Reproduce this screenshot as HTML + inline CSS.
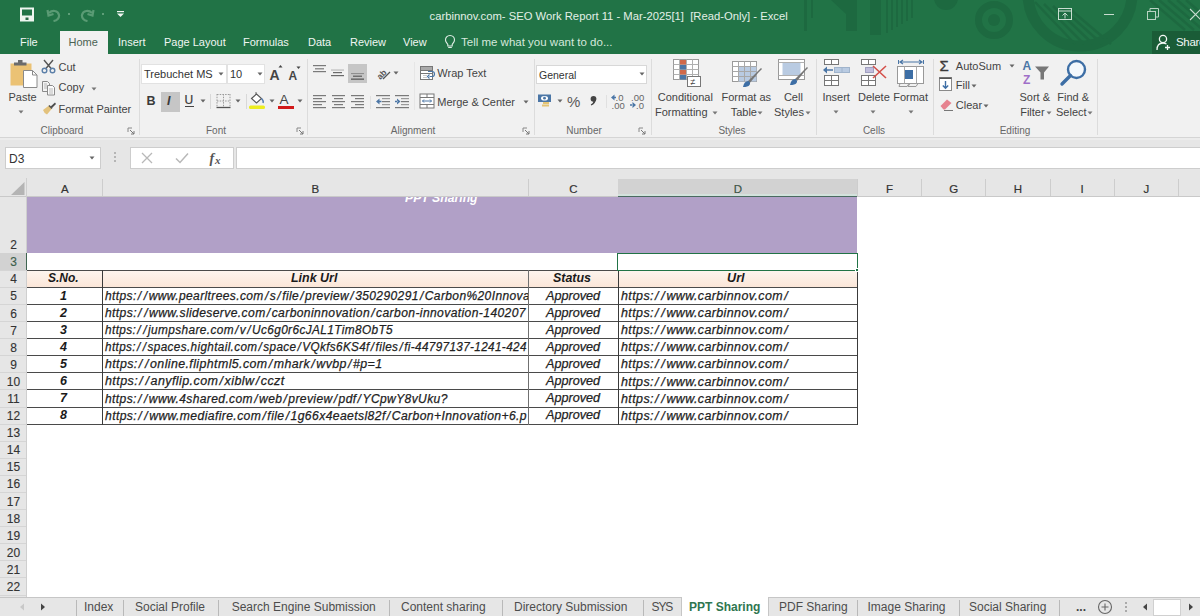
<!DOCTYPE html>
<html><head><meta charset="utf-8">
<style>
*{margin:0;padding:0;box-sizing:border-box}
html,body{width:1200px;height:616px;overflow:hidden;background:#fff;font-family:"Liberation Sans",sans-serif}
.a{position:absolute}
.t{white-space:nowrap;line-height:1}
.c{position:absolute;white-space:nowrap;line-height:1;font-family:"Liberation Sans",sans-serif;font-weight:bold;font-style:italic;font-size:12.5px;color:#1a1a1a;transform-origin:0 0}
.s{margin:0 1.2px}
</style></head><body>

<div class="a" style="left:0px;top:0px;width:1200px;height:54px;background:#217346"></div>
<svg class="a" style="left:0px;top:0px;" width="1200" height="54" viewBox="0 0 1200 54"><rect x="804" y="0" width="3" height="31" fill="#1d6940"/><rect x="811" y="0" width="2" height="18" fill="#1d6940"/><path d="M831 0 L846 0 L846 14 Z" fill="#1d6940"/><rect x="846" y="0" width="11" height="31" fill="#1d6940"/><rect x="870" y="0" width="11" height="35" fill="#1d6940"/><rect x="886" y="0" width="2" height="33" fill="#1d6940"/><rect x="891" y="0" width="2" height="30" fill="#1d6940"/><rect x="896" y="0" width="2" height="27" fill="#1d6940"/><rect x="901" y="0" width="2" height="24" fill="#1d6940"/><rect x="906" y="0" width="2" height="21" fill="#1d6940"/><rect x="911" y="0" width="2" height="18" fill="#1d6940"/><circle cx="946" cy="-2" r="12" fill="#1d6940"/><circle cx="994" cy="20" r="15.5" fill="none" stroke="#1d6940" stroke-width="7"/><circle cx="994" cy="20" r="6" fill="#1d6940"/><circle cx="1080" cy="-6" r="52" fill="none" stroke="#1d6940" stroke-width="11"/><path d="M1035 2 L1075 44" stroke="#1d6940" stroke-width="2.5"/><path d="M1044 4 L1084 44" stroke="#1d6940" stroke-width="2.5"/><path d="M1053 6 L1093 44" stroke="#1d6940" stroke-width="2.5"/><path d="M1062 8 L1102 44" stroke="#1d6940" stroke-width="2.5"/><path d="M1071 10 L1111 44" stroke="#1d6940" stroke-width="2.5"/><path d="M1150 0 L1185 30" stroke="#1d6940" stroke-width="2.5"/><path d="M1159 0 L1194 30" stroke="#1d6940" stroke-width="2.5"/><path d="M1168 0 L1203 30" stroke="#1d6940" stroke-width="2.5"/><path d="M1177 0 L1212 30" stroke="#1d6940" stroke-width="2.5"/><path d="M1186 0 L1221 30" stroke="#1d6940" stroke-width="2.5"/></svg>
<svg class="a" style="left:18px;top:6px;" width="17" height="16" viewBox="0 0 17 16"><path d="M3 2.5 H15 V14.5 H3 Z" fill="none" stroke="#eef6f0" stroke-width="2"/><rect x="4" y="9.5" width="10" height="5" fill="#eef6f0"/><rect x="7.5" y="11.5" width="3" height="2.5" fill="#2a6b46"/></svg>
<svg class="a" style="left:46px;top:7px;" width="16" height="15" viewBox="0 0 16 15"><path d="M3 6 C6 3 12 3 13 8 C13.5 11 11 13.5 7.5 14" fill="none" stroke="#5a9b74" stroke-width="2.2"/><path d="M1.5 3 L2.5 8.5 L7.5 7" fill="none" stroke="#5a9b74" stroke-width="2.2"/></svg>
<div class="a" style="left:68px;top:13px;width:2px;height:2px;background:#5e9e78"></div>
<svg class="a" style="left:79px;top:7px;" width="16" height="15" viewBox="0 0 16 15"><path d="M13 6 C10 3 4 3 3 8 C2.5 11 5 13.5 8.5 14" fill="none" stroke="#5a9b74" stroke-width="2.2"/><path d="M14.5 3 L13.5 8.5 L8.5 7" fill="none" stroke="#5a9b74" stroke-width="2.2"/></svg>
<div class="a" style="left:102px;top:13px;width:2px;height:2px;background:#5e9e78"></div>
<svg class="a" style="left:116px;top:10px;" width="9" height="8" viewBox="0 0 9 8"><rect x="1" y="1" width="7" height="1.2" fill="#f2f7f4"/><path d="M1 3.5 H8 L4.5 7 Z" fill="#f2f7f4"/></svg>
<div class="a t" style="left:429.5px;top:10.64px;font-size:11.25px;color:#e3f0e7;">carbinnov.com- SEO Work Report 11 - Mar-2025[1]&nbsp; [Read-Only] - Excel</div>
<svg class="a" style="left:1058px;top:8px;" width="15" height="13" viewBox="0 0 15 13"><rect x="0.5" y="0.5" width="13" height="11" fill="none" stroke="#c8ddd0" stroke-width="1"/><path d="M0.5 3 H13.5" stroke="#c8ddd0"/><path d="M7 10.5 V5 M4.5 7.5 L7 5 L9.5 7.5" fill="none" stroke="#c8ddd0"/></svg>
<div class="a" style="left:1104px;top:14px;width:10px;height:1px;background:#c8ddd0"></div>
<svg class="a" style="left:1147px;top:8px;" width="13" height="13" viewBox="0 0 13 13"><rect x="0.5" y="3.5" width="8" height="8" fill="none" stroke="#b9d3c3"/><path d="M3 3.5 V0.5 H11.5 V9 H8.5" fill="none" stroke="#b9d3c3"/></svg>
<svg class="a" style="left:1189px;top:8px;" width="11" height="14" viewBox="0 0 11 14"><path d="M1 1 L12 12 M12 1 L1 12" stroke="#c8ddd0" stroke-width="1.1"/></svg>
<div class="a" style="left:60px;top:31px;width:48px;height:23px;background:#f1f1f1"></div>
<div class="a t" style="left:20px;top:37.15px;font-size:11px;color:#f0f6f2;">File</div>
<div class="a t" style="left:118px;top:37.15px;font-size:11px;color:#f0f6f2;">Insert</div>
<div class="a t" style="left:164px;top:37.15px;font-size:11px;color:#f0f6f2;">Page Layout</div>
<div class="a t" style="left:243px;top:37.15px;font-size:11px;color:#f0f6f2;">Formulas</div>
<div class="a t" style="left:308px;top:37.15px;font-size:11px;color:#f0f6f2;">Data</div>
<div class="a t" style="left:350px;top:37.15px;font-size:11px;color:#f0f6f2;">Review</div>
<div class="a t" style="left:403px;top:37.15px;font-size:11px;color:#f0f6f2;">View</div>
<div class="a t" style="left:68.5px;top:37.15px;font-size:11px;color:#4b6353;">Home</div>
<svg class="a" style="left:444px;top:34px;" width="12" height="15" viewBox="0 0 12 15"><path d="M6 1.5 C3 1.5 1.5 3.8 1.5 6 C1.5 8 3 9 3.8 10.5 V12 H8.2 V10.5 C9 9 10.5 8 10.5 6 C10.5 3.8 9 1.5 6 1.5 Z M4.2 13.5 H7.8" fill="none" stroke="#e0eee6" stroke-width="1.1"/></svg>
<div class="a t" style="left:461px;top:36.73px;font-size:11.5px;color:#d5e8dc;">Tell me what you want to do...</div>
<div class="a" style="left:1152px;top:31px;width:48px;height:23px;background:#1a5c37"></div>
<svg class="a" style="left:1156px;top:34px;" width="15" height="17" viewBox="0 0 15 17"><circle cx="7" cy="5" r="3.6" fill="none" stroke="#f2f7f4" stroke-width="1.3"/><path d="M1 16 C1 11 4 9 7 9 C8.5 9 9.5 9.5 10.5 10" fill="none" stroke="#f2f7f4" stroke-width="1.3"/><path d="M11.5 11 V16 M9 13.5 H14" stroke="#f2f7f4" stroke-width="1.3"/></svg>
<div class="a t" style="left:1176px;top:37.23px;font-size:11.5px;color:#f2f7f4;letter-spacing:-0.3px">Share</div>
<div class="a" style="left:0px;top:54px;width:1200px;height:83px;background:#f1f1f1"></div>
<div class="a" style="left:0px;top:137px;width:1200px;height:1px;background:#d5d5d5"></div>
<div class="a" style="left:139px;top:59px;width:1px;height:76px;background:#dcdcdc"></div>
<div class="a" style="left:307px;top:59px;width:1px;height:76px;background:#dcdcdc"></div>
<div class="a" style="left:534px;top:59px;width:1px;height:76px;background:#dcdcdc"></div>
<div class="a" style="left:651px;top:59px;width:1px;height:76px;background:#dcdcdc"></div>
<div class="a" style="left:816px;top:59px;width:1px;height:76px;background:#dcdcdc"></div>
<div class="a" style="left:933px;top:59px;width:1px;height:76px;background:#dcdcdc"></div>
<div class="a" style="left:1097px;top:59px;width:1px;height:76px;background:#dcdcdc"></div>
<div class="a t" style="left:32.0px;top:125.5px;width:60px;text-align:center;font-size:10px;color:#676767">Clipboard</div>
<div class="a t" style="left:196.0px;top:125.5px;width:40px;text-align:center;font-size:10px;color:#676767">Font</div>
<div class="a t" style="left:378.0px;top:125.5px;width:70px;text-align:center;font-size:10px;color:#676767">Alignment</div>
<div class="a t" style="left:559.0px;top:125.5px;width:50px;text-align:center;font-size:10px;color:#676767">Number</div>
<div class="a t" style="left:707.0px;top:125.5px;width:50px;text-align:center;font-size:10px;color:#676767">Styles</div>
<div class="a t" style="left:854.0px;top:125.5px;width:40px;text-align:center;font-size:10px;color:#676767">Cells</div>
<div class="a t" style="left:990.0px;top:125.5px;width:50px;text-align:center;font-size:10px;color:#676767">Editing</div>
<svg class="a" style="left:127px;top:127px;" width="8" height="8" viewBox="0 0 8 8"><path d="M1 1 H5 M1 1 V5" stroke="#888" stroke-width="1"/><path d="M3 3 L7 7 M7 4 V7 H4" fill="none" stroke="#777" stroke-width="1"/></svg>
<svg class="a" style="left:296px;top:127px;" width="8" height="8" viewBox="0 0 8 8"><path d="M1 1 H5 M1 1 V5" stroke="#888" stroke-width="1"/><path d="M3 3 L7 7 M7 4 V7 H4" fill="none" stroke="#777" stroke-width="1"/></svg>
<svg class="a" style="left:522px;top:127px;" width="8" height="8" viewBox="0 0 8 8"><path d="M1 1 H5 M1 1 V5" stroke="#888" stroke-width="1"/><path d="M3 3 L7 7 M7 4 V7 H4" fill="none" stroke="#777" stroke-width="1"/></svg>
<svg class="a" style="left:638px;top:127px;" width="8" height="8" viewBox="0 0 8 8"><path d="M1 1 H5 M1 1 V5" stroke="#888" stroke-width="1"/><path d="M3 3 L7 7 M7 4 V7 H4" fill="none" stroke="#777" stroke-width="1"/></svg>
<svg class="a" style="left:9px;top:59px;" width="30" height="30" viewBox="0 0 30 30"><rect x="1.5" y="4.5" width="21" height="22" fill="#ebc274"/><rect x="5" y="3.5" width="12.5" height="3" fill="#6b6b6b"/><rect x="9" y="1" width="4.5" height="3" fill="#6b6b6b"/><path d="M14.5 11.5 H23.5 L28 16 V28.5 H14.5 Z" fill="#fff" stroke="#8a8a8a" stroke-width="1"/><path d="M23.5 11.5 V16 H28" fill="none" stroke="#8a8a8a" stroke-width="1"/></svg>
<div class="a t" style="left:8.5px;top:91.65px;font-size:11px;color:#444;">Paste</div>
<svg class="a" style="left:17.5px;top:110px;" width="6" height="4" viewBox="0 0 6 4"><path d="M0.5 0.5 L5.5 0.5 L3 3.5 Z" fill="#777"/></svg>
<svg class="a" style="left:41px;top:59px;" width="15" height="15" viewBox="0 0 15 15"><path d="M3 1 L10.5 10 M12 1 L4.5 10" stroke="#555" stroke-width="1.4"/><circle cx="3.5" cy="11.5" r="2.3" fill="none" stroke="#5b7fa8" stroke-width="1.4"/><circle cx="11.5" cy="11.5" r="2.3" fill="none" stroke="#5b7fa8" stroke-width="1.4"/></svg>
<div class="a t" style="left:58.5px;top:62.15px;font-size:11px;color:#444;">Cut</div>
<svg class="a" style="left:41px;top:80px;" width="15" height="16" viewBox="0 0 15 16"><path d="M1.5 1.5 H6.5 L8.5 3.5 V11.5 H1.5 Z" fill="#f4f4f4" stroke="#8a8a8a" stroke-width="1"/><path d="M6.5 5.5 H11.5 L13.5 7.5 V15 H6.5 Z" fill="#fbfbfb" stroke="#8a8a8a" stroke-width="1"/><path d="M8 9 H12 M8 11 H12 M8 13 H12 M3 4 H6 M3 6 H6 M3 8 H6" stroke="#aaa" stroke-width="0.8"/></svg>
<div class="a t" style="left:58.5px;top:82.15px;font-size:11px;color:#444;">Copy</div>
<svg class="a" style="left:91px;top:87px;" width="6" height="4" viewBox="0 0 6 4"><path d="M0.5 0.5 L5.5 0.5 L3 3.5 Z" fill="#777"/></svg>
<svg class="a" style="left:41px;top:101px;" width="16" height="15" viewBox="0 0 16 15"><path d="M9 6 L14 1.5 L15 3 L10.5 7.5 Z" fill="#4d4d4d"/><path d="M2 9 L8 4.5 L11 7.5 L6 13.5 Q3 12 2 9 Z" fill="#e3c27c"/><path d="M8 4.5 L11 7.5" stroke="#555" stroke-width="1.5"/></svg>
<div class="a t" style="left:58.5px;top:103.65px;font-size:11px;color:#444;">Format Painter</div>
<div class="a" style="left:141px;top:64px;width:86px;height:20px;background:#fff;border:1px solid #e2e2e2"></div>
<div class="a" style="left:227px;top:64px;width:38px;height:20px;background:#fff;border:1px solid #e2e2e2;border-left:none"></div>
<div class="a" style="left:227px;top:65px;width:1px;height:18px;background:#e2e2e2"></div>
<div class="a t" style="left:144px;top:69.15px;font-size:11px;color:#333;">Trebuchet MS</div>
<svg class="a" style="left:218px;top:71.5px;" width="6" height="4" viewBox="0 0 6 4"><path d="M0.5 0.5 L5.5 0.5 L3 3.5 Z" fill="#666"/></svg>
<div class="a t" style="left:230px;top:69.15px;font-size:11px;color:#333;">10</div>
<svg class="a" style="left:256.5px;top:71.5px;" width="6" height="4" viewBox="0 0 6 4"><path d="M0.5 0.5 L5.5 0.5 L3 3.5 Z" fill="#666"/></svg>
<div class="a t" style="left:269.5px;top:68.10px;font-size:14px;color:#444;font-weight:bold">A</div>
<svg class="a" style="left:278px;top:64px;" width="5" height="5" viewBox="0 0 5 5"><path d="M0.5 3.5 L2.5 1 L4.5 3.5 Z" fill="#444"/></svg>
<div class="a t" style="left:288.5px;top:69.80px;font-size:12px;color:#444;font-weight:bold">A</div>
<svg class="a" style="left:296px;top:66px;" width="5" height="4" viewBox="0 0 5 4"><path d="M0.5 0.5 L4.5 0.5 L2.5 3 Z" fill="#444"/></svg>
<div class="a t" style="left:146.5px;top:94.67px;font-size:12.5px;color:#3a3a3a;font-weight:bold">B</div>
<div class="a" style="left:161px;top:91.5px;width:19px;height:20px;background:#c6c6c6"></div>
<div class="a t" style="left:167px;top:94.67px;font-size:12.5px;color:#3a3a3a;font-style:italic;font-weight:bold">I</div>
<div class="a t" style="left:184.5px;top:94.30px;font-size:12px;color:#3a3a3a;-webkit-text-stroke:0.2px #3a3a3a">U</div>
<div class="a" style="left:185px;top:106px;width:8.5px;height:1.2px;background:#444"></div>
<svg class="a" style="left:200px;top:99px;" width="6" height="4" viewBox="0 0 6 4"><path d="M0.5 0.5 L5.5 0.5 L3 3.5 Z" fill="#666"/></svg>
<div class="a" style="left:210px;top:94px;width:1px;height:15px;background:#d8d8d8"></div>
<svg class="a" style="left:216px;top:93px;" width="15" height="16" viewBox="0 0 15 16"><path d="M1 1.5 H14 M1 8 H14 M7.5 1 V14.5 M1 1 V14.5 M14 1 V14.5" stroke="#9a9a9a" stroke-width="1" stroke-dasharray="1.5 1.2"/><path d="M0.5 14.5 H14.5" stroke="#555" stroke-width="1.3"/></svg>
<svg class="a" style="left:234.5px;top:99px;" width="6" height="4" viewBox="0 0 6 4"><path d="M0.5 0.5 L5.5 0.5 L3 3.5 Z" fill="#666"/></svg>
<div class="a" style="left:245.5px;top:94px;width:1px;height:15px;background:#d8d8d8"></div>
<svg class="a" style="left:247px;top:90px;" width="20" height="20" viewBox="0 0 20 20"><path d="M9 2 V6" stroke="#666" stroke-width="1"/><path d="M4.5 8.5 L9.5 4 L14.5 8.5 L9.5 13 Z" fill="#fff" stroke="#555" stroke-width="1.1"/><path d="M14.5 8.5 Q17 11 16 13" fill="none" stroke="#4f79b0" stroke-width="1.4"/><rect x="2" y="15.5" width="16" height="3.5" rx="1.5" fill="#eded1f"/></svg>
<svg class="a" style="left:269px;top:99px;" width="6" height="4" viewBox="0 0 6 4"><path d="M0.5 0.5 L5.5 0.5 L3 3.5 Z" fill="#666"/></svg>
<div class="a t" style="left:279.5px;top:93.03px;font-size:13.5px;color:#444;">A</div>
<div class="a" style="left:278px;top:105.5px;width:15.5px;height:3.3px;background:#d21a1a"></div>
<svg class="a" style="left:297px;top:99px;" width="6" height="4" viewBox="0 0 6 4"><path d="M0.5 0.5 L5.5 0.5 L3 3.5 Z" fill="#666"/></svg>
<svg class="a" style="left:312px;top:62px;" width="16" height="12" viewBox="0 0 16 12"><rect x="1" y="3" width="13" height="1.2" fill="#7a7a7a"/><rect x="3" y="6.2" width="9" height="1.2" fill="#7a7a7a"/><rect x="1" y="9" width="13" height="1.2" fill="#7a7a7a"/></svg>
<svg class="a" style="left:330px;top:66px;" width="16" height="12" viewBox="0 0 16 12"><rect x="1" y="3.5" width="13" height="1.1" fill="#b5b5b5"/><rect x="3" y="6" width="9" height="1.2" fill="#6a6a6a"/><rect x="1" y="9" width="13" height="1.2" fill="#6a6a6a"/></svg>
<div class="a" style="left:348px;top:64px;width:19px;height:19px;background:#c6c6c6"></div>
<svg class="a" style="left:350px;top:71px;" width="16" height="10" viewBox="0 0 16 10"><rect x="1" y="2" width="13" height="1.1" fill="#8f8f8f"/><rect x="3" y="4.6" width="9" height="1.2" fill="#5a5a5a"/><rect x="1" y="7.5" width="13" height="1.3" fill="#5a5a5a"/></svg>
<svg class="a" style="left:376px;top:65px;" width="16" height="16" viewBox="0 0 16 16"><text x="0" y="11" font-family="Liberation Sans" font-size="8.5" font-weight="bold" fill="#555" transform="rotate(-45 7 8)">ab</text><path d="M7 14 L14 7" stroke="#555" stroke-width="1.2"/></svg>
<svg class="a" style="left:392.5px;top:71px;" width="6" height="4" viewBox="0 0 6 4"><path d="M0.5 0.5 L5.5 0.5 L3 3.5 Z" fill="#666"/></svg>
<svg class="a" style="left:312px;top:94px;" width="16" height="16" viewBox="0 0 16 16"><rect x="1" y="1" width="13" height="1.2" fill="#7a7a7a"/><rect x="1" y="4" width="9" height="1.2" fill="#7a7a7a"/><rect x="1" y="7" width="13" height="1.2" fill="#7a7a7a"/><rect x="1" y="10" width="9" height="1.2" fill="#7a7a7a"/><rect x="1" y="13" width="13" height="1.2" fill="#7a7a7a"/></svg>
<svg class="a" style="left:331px;top:94px;" width="16" height="16" viewBox="0 0 16 16"><rect x="1" y="1" width="13" height="1.2" fill="#7a7a7a"/><rect x="3" y="4" width="9" height="1.2" fill="#7a7a7a"/><rect x="1" y="7" width="13" height="1.2" fill="#7a7a7a"/><rect x="3" y="10" width="9" height="1.2" fill="#7a7a7a"/><rect x="1" y="13" width="13" height="1.2" fill="#7a7a7a"/></svg>
<svg class="a" style="left:350px;top:94px;" width="16" height="16" viewBox="0 0 16 16"><rect x="1" y="1" width="13" height="1.2" fill="#7a7a7a"/><rect x="5" y="4" width="9" height="1.2" fill="#7a7a7a"/><rect x="1" y="7" width="13" height="1.2" fill="#7a7a7a"/><rect x="5" y="10" width="9" height="1.2" fill="#7a7a7a"/><rect x="1" y="13" width="13" height="1.2" fill="#7a7a7a"/></svg>
<div class="a" style="left:369.5px;top:96px;width:1px;height:13px;background:#e0e0e0"></div>
<svg class="a" style="left:375px;top:94px;" width="16" height="16" viewBox="0 0 16 16"><rect x="1" y="1" width="14" height="1.2" fill="#7a7a7a"/><rect x="7" y="4" width="8" height="1.2" fill="#9a9a9a"/><rect x="7" y="7" width="8" height="1.2" fill="#7a7a7a"/><rect x="7" y="10" width="8" height="1.2" fill="#9a9a9a"/><rect x="1" y="13" width="14" height="1.2" fill="#7a7a7a"/><path d="M1 7.5 L4.5 4.5 V10.5 Z M4 6.8 H6.5 V8.2 H4Z" fill="#4b76a6"/></svg>
<svg class="a" style="left:394px;top:94px;" width="16" height="16" viewBox="0 0 16 16"><rect x="1" y="1" width="14" height="1.2" fill="#7a7a7a"/><rect x="7" y="4" width="8" height="1.2" fill="#9a9a9a"/><rect x="7" y="7" width="8" height="1.2" fill="#7a7a7a"/><rect x="7" y="10" width="8" height="1.2" fill="#9a9a9a"/><rect x="1" y="13" width="14" height="1.2" fill="#7a7a7a"/><path d="M6.5 7.5 L3 4.5 V10.5 Z M1 6.8 H3.5 V8.2 H1Z" fill="#4b76a6"/></svg>
<div class="a" style="left:413.5px;top:62px;width:1px;height:48px;background:#e6e6e6"></div>
<svg class="a" style="left:419px;top:65px;" width="17" height="16" viewBox="0 0 17 16"><rect x="1.5" y="1.5" width="12" height="13" fill="#fff" stroke="#777" stroke-width="1"/><rect x="2" y="2" width="11" height="3" fill="#aaa"/><path d="M1.5 5.5 H13.5 M1.5 8.5 H13.5" stroke="#777"/><path d="M9 6.5 H13 Q15.5 6.5 15.5 9 Q15.5 11.5 13 11.5 H10.5" fill="none" stroke="#4b76a6" stroke-width="1.2"/><path d="M10.5 9.5 L8.5 11.5 L10.5 13.5" fill="none" stroke="#4b76a6" stroke-width="1.1"/><path d="M4 10.5 H8 M4 12.5 H8" stroke="#bbb" stroke-width="0.8"/></svg>
<div class="a t" style="left:437.3px;top:68.35px;font-size:11px;color:#444;">Wrap Text</div>
<svg class="a" style="left:419px;top:93px;" width="16" height="16" viewBox="0 0 16 16"><rect x="1" y="1" width="14" height="14" fill="#fff" stroke="#777" stroke-width="1"/><path d="M1 4.5 H15 M1 11.5 H15 M8 1 V4.5 M8 11.5 V15" stroke="#777"/><path d="M3.5 8 H12.5 M5 6.5 L3.5 8 L5 9.5 M11 6.5 L12.5 8 L11 9.5" fill="none" stroke="#4b76a6" stroke-width="1"/></svg>
<div class="a t" style="left:437.3px;top:96.95px;font-size:11px;color:#444;">Merge &amp; Center</div>
<svg class="a" style="left:522.5px;top:99.5px;" width="6" height="4" viewBox="0 0 6 4"><path d="M0.5 0.5 L5.5 0.5 L3 3.5 Z" fill="#666"/></svg>
<div class="a" style="left:536px;top:65px;width:111px;height:19px;background:#fff;border:1px solid #d8d8d8"></div>
<div class="a t" style="left:539px;top:69.58px;font-size:10.5px;color:#333;">General</div>
<svg class="a" style="left:638.5px;top:71.5px;" width="6" height="4" viewBox="0 0 6 4"><path d="M0.5 0.5 L5.5 0.5 L3 3.5 Z" fill="#666"/></svg>
<svg class="a" style="left:537px;top:93px;" width="18" height="16" viewBox="0 0 18 16"><rect x="1" y="1.5" width="13" height="7.5" fill="#4b76a6"/><ellipse cx="7.5" cy="5.2" rx="3.5" ry="2.3" fill="#fff"/><circle cx="7.5" cy="5.2" r="1.4" fill="#4b76a6"/><rect x="6" y="9" width="6" height="2" fill="#e4c474"/><rect x="5" y="11.5" width="7" height="2" fill="#e4c474"/></svg>
<svg class="a" style="left:557px;top:99px;" width="6" height="4" viewBox="0 0 6 4"><path d="M0.5 0.5 L5.5 0.5 L3 3.5 Z" fill="#666"/></svg>
<div class="a t" style="left:567px;top:94.25px;font-size:15px;color:#5a5a5a;">%</div>
<svg class="a" style="left:589px;top:95px;" width="9" height="11" viewBox="0 0 9 11"><circle cx="4.5" cy="3.8" r="2.9" fill="#444"/><path d="M6.6 4.5 Q7 8.5 2.2 10.5 L1.8 9.6 Q4.5 8 4.6 5.5 Z" fill="#444"/></svg>
<div class="a" style="left:606px;top:95px;width:1px;height:13px;background:#e0e0e0"></div>
<svg class="a" style="left:610px;top:93px;" width="18" height="16" viewBox="0 0 18 16"><path d="M1 4.5 L4.5 1.5 V7.5 Z M3.5 3.8 H6 V5.2 H3.5Z" fill="#4b76a6"/><text x="5.5" y="8" font-family="Liberation Sans" font-size="9.5" fill="#666">.0</text><text x="1.5" y="15.5" font-family="Liberation Sans" font-size="9.5" fill="#666">.00</text></svg>
<svg class="a" style="left:629px;top:93px;" width="18" height="16" viewBox="0 0 18 16"><text x="2" y="8" font-family="Liberation Sans" font-size="9.5" fill="#666">.00</text><path d="M7 12 L3.5 9 V15 Z M1 11.3 H4 V12.7 H1Z" fill="#4b76a6"/><text x="7" y="15.5" font-family="Liberation Sans" font-size="9.5" fill="#666">.0</text></svg>
<svg class="a" style="left:673px;top:59px;" width="29" height="29" viewBox="0 0 29 29"><g stroke="#9a9a9a" stroke-width="1" fill="#fff"><rect x="0.5" y="0.5" width="25" height="20"/></g><path d="M0.5 5.5 H25.5 M0.5 10.5 H25.5 M0.5 15.5 H25.5 M6.5 0.5 V20.5 M13.5 0.5 V20.5 M19.5 0.5 V20.5" stroke="#b0b0b0" stroke-width="1"/><rect x="7" y="1" width="6" height="4.5" fill="#d0694a"/><rect x="7" y="6" width="6" height="4.5" fill="#4b76a6"/><rect x="7" y="11" width="6" height="4.5" fill="#d0694a"/><rect x="7" y="16" width="6" height="4.5" fill="#4b76a6"/><rect x="14.5" y="17.5" width="13" height="10" fill="#fff" stroke="#777"/><text x="17.5" y="26" font-family="Liberation Sans" font-size="9" fill="#444">&#8800;</text></svg>
<div class="a t" style="left:657.8px;top:91.95px;font-size:11px;color:#444;">Conditional</div>
<div class="a t" style="left:655px;top:106.85px;font-size:11px;color:#444;">Formatting</div>
<svg class="a" style="left:712px;top:110.5px;" width="6" height="4" viewBox="0 0 6 4"><path d="M0.5 0.5 L5.5 0.5 L3 3.5 Z" fill="#777"/></svg>
<svg class="a" style="left:732px;top:61px;" width="31" height="27" viewBox="0 0 31 27"><rect x="0.5" y="0.5" width="24" height="20" fill="#fff" stroke="#9a9a9a"/><rect x="6" y="5" width="18.5" height="15.5" fill="#b9cbe2"/><path d="M0.5 5.5 H24.5 M0.5 10.5 H24.5 M0.5 15.5 H24.5 M6.5 0.5 V20.5 M12.5 0.5 V20.5 M18.5 0.5 V20.5" stroke="#a8a8a8" stroke-width="1"/><path d="M15 21 L25 11 L29 7 L30 8 L26 12 L17 23 Z" fill="#777"/><path d="M11 26 Q12 20 16.5 20 Q19 22 17.5 24 Q16 26 11 26 Z" fill="#3d6ea5"/></svg>
<div class="a t" style="left:721.5px;top:91.95px;font-size:11px;color:#444;">Format as</div>
<div class="a t" style="left:730.7px;top:106.85px;font-size:11px;color:#444;">Table</div>
<svg class="a" style="left:757px;top:110.5px;" width="6" height="4" viewBox="0 0 6 4"><path d="M0.5 0.5 L5.5 0.5 L3 3.5 Z" fill="#777"/></svg>
<svg class="a" style="left:778px;top:59px;" width="31" height="28" viewBox="0 0 31 28"><rect x="0.5" y="0.5" width="26" height="20" fill="#fff" stroke="#9a9a9a"/><rect x="4.5" y="4" width="18" height="12" fill="#b9cbe2"/><path d="M0.5 3.5 H26.5 M0.5 16.5 H26.5" stroke="#b0b0b0"/><path d="M17 20 L26 11 L29 8 L30 9 L27 12 L19 22 Z" fill="#777"/><path d="M12 26 Q13 20 17.5 20 Q20 22 18.5 24 Q17 26 12 26 Z" fill="#3d6ea5"/></svg>
<div class="a t" style="left:783.9px;top:91.95px;font-size:11px;color:#444;">Cell</div>
<div class="a t" style="left:774px;top:106.85px;font-size:11px;color:#444;">Styles</div>
<svg class="a" style="left:804.5px;top:110.5px;" width="6" height="4" viewBox="0 0 6 4"><path d="M0.5 0.5 L5.5 0.5 L3 3.5 Z" fill="#777"/></svg>
<svg class="a" style="left:822px;top:59px;" width="29" height="29" viewBox="0 0 29 29"><rect x="2.5" y="0.5" width="14" height="5" fill="#fff" stroke="#777"/><path d="M9.5 0.5 V5.5" stroke="#777"/><rect x="12.5" y="8.5" width="15" height="5" fill="#b9cbe2" stroke="#a0b4cc"/><path d="M20 8.5 V13.5" stroke="#a0b4cc"/><path d="M1 11 L5 7.5 V14.5 Z M4 10.2 H11 V11.8 H4Z" fill="#4b76a6"/><rect x="2.5" y="16.5" width="14" height="10" fill="#fff" stroke="#777"/><path d="M9.5 16.5 V26.5 M2.5 21.5 H16.5" stroke="#777"/></svg>
<div class="a t" style="left:822.4px;top:92.15px;font-size:11px;color:#444;">Insert</div>
<svg class="a" style="left:833px;top:110px;" width="6" height="4" viewBox="0 0 6 4"><path d="M0.5 0.5 L5.5 0.5 L3 3.5 Z" fill="#777"/></svg>
<svg class="a" style="left:860px;top:59px;" width="29" height="29" viewBox="0 0 29 29"><rect x="1.5" y="0.5" width="14" height="5" fill="#fff" stroke="#777"/><path d="M8.5 0.5 V5.5" stroke="#777"/><rect x="5.5" y="8.5" width="8" height="5" fill="#c0bddc" stroke="#a0a0c0"/><rect x="1.5" y="16.5" width="14" height="10" fill="#fff" stroke="#777"/><path d="M8.5 16.5 V26.5 M1.5 21.5 H15.5" stroke="#777"/><path d="M13 7 L26 19 M26 7 L13 19" stroke="#d4504a" stroke-width="1.6"/></svg>
<div class="a t" style="left:858px;top:92.15px;font-size:11px;color:#444;">Delete</div>
<svg class="a" style="left:870px;top:110px;" width="6" height="4" viewBox="0 0 6 4"><path d="M0.5 0.5 L5.5 0.5 L3 3.5 Z" fill="#777"/></svg>
<svg class="a" style="left:897px;top:59px;" width="28" height="29" viewBox="0 0 28 29"><path d="M1.5 1 V5 M26.5 1 V5" stroke="#4b76a6"/><path d="M3 3 H25 M6 1 L3 3 L6 5 M22 1 L25 3 L22 5" fill="none" stroke="#4b76a6" stroke-width="1.2"/><rect x="0.5" y="7.5" width="26" height="17" fill="#fff" stroke="#999"/><path d="M7.5 7.5 V24.5 M19.5 7.5 V24.5" stroke="#aaa"/><rect x="8" y="11" width="8" height="9" fill="#3d6ea5"/><path d="M3 24.5 L2 27.5 H10 L12 24.5 M13 24.5 L11 27.5 H19 L21 24.5" fill="none" stroke="#999"/></svg>
<div class="a t" style="left:893.2px;top:92.15px;font-size:11px;color:#444;">Format</div>
<svg class="a" style="left:908px;top:110px;" width="6" height="4" viewBox="0 0 6 4"><path d="M0.5 0.5 L5.5 0.5 L3 3.5 Z" fill="#777"/></svg>
<div class="a t" style="left:939.5px;top:58.25px;font-size:15px;color:#3b3b3b;-webkit-text-stroke:0.3px #3b3b3b">&#931;</div>
<div class="a t" style="left:955.8px;top:60.65px;font-size:11px;color:#444;">AutoSum</div>
<svg class="a" style="left:1009px;top:64px;" width="6" height="4" viewBox="0 0 6 4"><path d="M0.5 0.5 L5.5 0.5 L3 3.5 Z" fill="#666"/></svg>
<svg class="a" style="left:939px;top:77px;" width="14" height="15" viewBox="0 0 14 15"><rect x="0.5" y="0.5" width="12" height="13" fill="#fff" stroke="#8a8a8a"/><rect x="0.5" y="0.5" width="12" height="1.5" fill="#555"/><path d="M6.5 4 V11 M3.8 8.5 L6.5 11.2 L9.2 8.5" fill="none" stroke="#3d6ea5" stroke-width="1.4"/></svg>
<div class="a t" style="left:955.8px;top:80.25px;font-size:11px;color:#444;">Fill</div>
<svg class="a" style="left:971px;top:84px;" width="6" height="4" viewBox="0 0 6 4"><path d="M0.5 0.5 L5.5 0.5 L3 3.5 Z" fill="#666"/></svg>
<svg class="a" style="left:939px;top:97px;" width="15" height="15" viewBox="0 0 15 15"><path d="M1.5 9 L8 2.5 L12.5 6 L6 12.5 H4.5 Z" fill="#e6828f"/><path d="M5 13.5 H14" stroke="#777" stroke-width="1"/></svg>
<div class="a t" style="left:955.8px;top:99.85px;font-size:11px;color:#444;">Clear</div>
<svg class="a" style="left:983px;top:103.5px;" width="6" height="4" viewBox="0 0 6 4"><path d="M0.5 0.5 L5.5 0.5 L3 3.5 Z" fill="#666"/></svg>
<svg class="a" style="left:1021px;top:59px;" width="32" height="27" viewBox="0 0 32 27"><text x="1.5" y="11" font-family="Liberation Sans" font-size="12" font-weight="bold" fill="#4b76a6">A</text><text x="2" y="24.5" font-family="Liberation Sans" font-size="12" font-weight="bold" fill="#9f6fc8">Z</text><path d="M14 7.5 H28 L23 13.5 V20.5 H19.5 V13.5 Z" fill="#777"/></svg>
<div class="a t" style="left:1019.5px;top:91.95px;font-size:11px;color:#444;">Sort &amp;</div>
<div class="a t" style="left:1020.2px;top:106.85px;font-size:11px;color:#444;">Filter</div>
<svg class="a" style="left:1046px;top:110.5px;" width="6" height="4" viewBox="0 0 6 4"><path d="M0.5 0.5 L5.5 0.5 L3 3.5 Z" fill="#777"/></svg>
<svg class="a" style="left:1059px;top:58px;" width="30" height="30" viewBox="0 0 30 30"><circle cx="17.5" cy="11.5" r="8.5" fill="#f4f8fc" stroke="#3d6ea5" stroke-width="2.4"/><path d="M11.5 17.5 L3 26" stroke="#3d6ea5" stroke-width="3.4" stroke-linecap="round"/></svg>
<div class="a t" style="left:1057.3px;top:91.95px;font-size:11px;color:#444;">Find &amp;</div>
<div class="a t" style="left:1056px;top:106.85px;font-size:11px;color:#444;">Select</div>
<svg class="a" style="left:1086.5px;top:110.5px;" width="6" height="4" viewBox="0 0 6 4"><path d="M0.5 0.5 L5.5 0.5 L3 3.5 Z" fill="#777"/></svg>
<div class="a" style="left:0px;top:138px;width:1200px;height:40px;background:#e6e6e6"></div>
<div class="a" style="left:0px;top:138px;width:1200px;height:2px;background:#ececec"></div>
<div class="a" style="left:5px;top:147px;width:96px;height:22px;background:#fff;border:1px solid #cdcdcd"></div>
<div class="a t" style="left:9px;top:152.80px;font-size:12px;color:#333;">D3</div>
<svg class="a" style="left:89px;top:155.5px;" width="6" height="4" viewBox="0 0 6 4"><path d="M0.5 0.5 L5.5 0.5 L3 3.5 Z" fill="#666"/></svg>
<div class="a" style="left:114px;top:152px;width:2px;height:2px;background:#b5b5b5"></div>
<div class="a" style="left:114px;top:156px;width:2px;height:2px;background:#b5b5b5"></div>
<div class="a" style="left:114px;top:160px;width:2px;height:2px;background:#b5b5b5"></div>
<div class="a" style="left:130px;top:147px;width:104px;height:22px;background:#fff;border:1px solid #cdcdcd"></div>
<svg class="a" style="left:141px;top:152px;" width="12" height="12" viewBox="0 0 12 12"><path d="M1 1 L11 11 M11 1 L1 11" stroke="#b8b8b8" stroke-width="1.3"/></svg>
<svg class="a" style="left:175px;top:152px;" width="14" height="12" viewBox="0 0 14 12"><path d="M1 6.5 L5 10.5 L13 1.5" fill="none" stroke="#b8b8b8" stroke-width="1.5"/></svg>
<div class="a t" style="left:209.5px;top:151.60px;font-size:14px;color:#555;font-family:'Liberation Serif';font-style:italic;font-weight:bold">f</div>
<div class="a t" style="left:215px;top:154.65px;font-size:11px;color:#555;font-family:'Liberation Serif';font-style:italic;font-weight:bold">x</div>
<div class="a" style="left:236px;top:147px;width:964px;height:22px;background:#fff;border:1px solid #cdcdcd;border-right:none"></div>
<div class="a" style="left:0px;top:178px;width:1200px;height:419px;background:#fff"></div>
<div class="a" style="left:0px;top:178px;width:1200px;height:19px;background:#e6e6e6"></div>
<div class="a" style="left:0px;top:196px;width:1200px;height:1px;background:#c9c9c9"></div>
<svg class="a" style="left:9px;top:181px;" width="17" height="15" viewBox="0 0 17 15"><path d="M15.5 1 V14 H2 Z" fill="#b4b4b4"/></svg>
<div class="a" style="left:26px;top:178px;width:1px;height:419px;background:#cfcfcf"></div>
<div class="a" style="left:102.0px;top:179px;width:1px;height:17px;background:#cdcdcd"></div>
<div class="a t" style="left:27.0px;top:184px;width:75.5px;text-align:center;font-size:11.5px;color:#333;-webkit-text-stroke:0.2px #333">A</div>
<div class="a" style="left:527.9px;top:179px;width:1px;height:17px;background:#cdcdcd"></div>
<div class="a t" style="left:102.5px;top:184px;width:425.9px;text-align:center;font-size:11.5px;color:#333;-webkit-text-stroke:0.2px #333">B</div>
<div class="a" style="left:617.8px;top:179px;width:1px;height:17px;background:#cdcdcd"></div>
<div class="a t" style="left:528.4px;top:184px;width:89.9px;text-align:center;font-size:11.5px;color:#333;-webkit-text-stroke:0.2px #333">C</div>
<div class="a" style="left:618.3px;top:179px;width:239.1px;height:18px;background:#d2d2d2"></div>
<div class="a" style="left:618.3px;top:194px;width:239.1px;height:2px;background:#d3e2dc"></div>
<div class="a" style="left:618.3px;top:196px;width:239.1px;height:1.5px;background:#4a6b60"></div>
<div class="a" style="left:856.9px;top:179px;width:1px;height:17px;background:#cdcdcd"></div>
<div class="a t" style="left:618.3px;top:184px;width:239.1px;text-align:center;font-size:11.5px;color:#3d5547;-webkit-text-stroke:0.2px #3d5547">D</div>
<div class="a" style="left:921.1px;top:179px;width:1px;height:17px;background:#cdcdcd"></div>
<div class="a t" style="left:857.4px;top:184px;width:64.2px;text-align:center;font-size:11.5px;color:#333;-webkit-text-stroke:0.2px #333">F</div>
<div class="a" style="left:985.3px;top:179px;width:1px;height:17px;background:#cdcdcd"></div>
<div class="a t" style="left:921.6px;top:184px;width:64.2px;text-align:center;font-size:11.5px;color:#333;-webkit-text-stroke:0.2px #333">G</div>
<div class="a" style="left:1049.5px;top:179px;width:1px;height:17px;background:#cdcdcd"></div>
<div class="a t" style="left:985.8px;top:184px;width:64.2px;text-align:center;font-size:11.5px;color:#333;-webkit-text-stroke:0.2px #333">H</div>
<div class="a" style="left:1113.7px;top:179px;width:1px;height:17px;background:#cdcdcd"></div>
<div class="a t" style="left:1050.0px;top:184px;width:64.2px;text-align:center;font-size:11.5px;color:#333;-webkit-text-stroke:0.2px #333">I</div>
<div class="a" style="left:1177.9px;top:179px;width:1px;height:17px;background:#cdcdcd"></div>
<div class="a t" style="left:1114.2px;top:184px;width:64.2px;text-align:center;font-size:11.5px;color:#333;-webkit-text-stroke:0.2px #333">J</div>
<div class="a" style="left:1241.5px;top:179px;width:1px;height:17px;background:#cdcdcd"></div>
<div class="a" style="left:0px;top:197px;width:26px;height:400px;background:#e6e6e6"></div>
<div class="a" style="left:0;top:252.5px;width:26px;height:1px;background:#d5d5d5"></div>
<div class="a t" style="left:0;top:238.9px;width:27px;text-align:center;font-size:12px;color:#333;-webkit-text-stroke:0.12px #333">2</div>
<div class="a" style="left:0;top:253.0px;width:26px;height:17.3px;background:#d2d2d2"></div>
<div class="a" style="left:25.8px;top:253.0px;width:1.4px;height:17.3px;background:#3f6551"></div>
<div class="a" style="left:0;top:269.8px;width:26px;height:1px;background:#d5d5d5"></div>
<div class="a t" style="left:0;top:256.2px;width:27px;text-align:center;font-size:12px;color:#3d5e4c;-webkit-text-stroke:0.12px #3d5e4c">3</div>
<div class="a" style="left:0;top:286.9px;width:26px;height:1px;background:#d5d5d5"></div>
<div class="a t" style="left:0;top:273.3px;width:27px;text-align:center;font-size:12px;color:#333;-webkit-text-stroke:0.12px #333">4</div>
<div class="a" style="left:0;top:304.0px;width:26px;height:1px;background:#d5d5d5"></div>
<div class="a t" style="left:0;top:290.4px;width:27px;text-align:center;font-size:12px;color:#333;-webkit-text-stroke:0.12px #333">5</div>
<div class="a" style="left:0;top:321.1px;width:26px;height:1px;background:#d5d5d5"></div>
<div class="a t" style="left:0;top:307.5px;width:27px;text-align:center;font-size:12px;color:#333;-webkit-text-stroke:0.12px #333">6</div>
<div class="a" style="left:0;top:338.2px;width:26px;height:1px;background:#d5d5d5"></div>
<div class="a t" style="left:0;top:324.6px;width:27px;text-align:center;font-size:12px;color:#333;-webkit-text-stroke:0.12px #333">7</div>
<div class="a" style="left:0;top:355.2px;width:26px;height:1px;background:#d5d5d5"></div>
<div class="a t" style="left:0;top:341.6px;width:27px;text-align:center;font-size:12px;color:#333;-webkit-text-stroke:0.12px #333">8</div>
<div class="a" style="left:0;top:372.3px;width:26px;height:1px;background:#d5d5d5"></div>
<div class="a t" style="left:0;top:358.7px;width:27px;text-align:center;font-size:12px;color:#333;-webkit-text-stroke:0.12px #333">9</div>
<div class="a" style="left:0;top:389.4px;width:26px;height:1px;background:#d5d5d5"></div>
<div class="a t" style="left:0;top:375.8px;width:27px;text-align:center;font-size:12px;color:#333;-webkit-text-stroke:0.12px #333">10</div>
<div class="a" style="left:0;top:406.5px;width:26px;height:1px;background:#d5d5d5"></div>
<div class="a t" style="left:0;top:392.9px;width:27px;text-align:center;font-size:12px;color:#333;-webkit-text-stroke:0.12px #333">11</div>
<div class="a" style="left:0;top:423.6px;width:26px;height:1px;background:#d5d5d5"></div>
<div class="a t" style="left:0;top:410.0px;width:27px;text-align:center;font-size:12px;color:#333;-webkit-text-stroke:0.12px #333">12</div>
<div class="a" style="left:0;top:440.7px;width:26px;height:1px;background:#d5d5d5"></div>
<div class="a t" style="left:0;top:427.1px;width:27px;text-align:center;font-size:12px;color:#333;-webkit-text-stroke:0.12px #333">13</div>
<div class="a" style="left:0;top:457.8px;width:26px;height:1px;background:#d5d5d5"></div>
<div class="a t" style="left:0;top:444.2px;width:27px;text-align:center;font-size:12px;color:#333;-webkit-text-stroke:0.12px #333">14</div>
<div class="a" style="left:0;top:474.9px;width:26px;height:1px;background:#d5d5d5"></div>
<div class="a t" style="left:0;top:461.3px;width:27px;text-align:center;font-size:12px;color:#333;-webkit-text-stroke:0.12px #333">15</div>
<div class="a" style="left:0;top:492.0px;width:26px;height:1px;background:#d5d5d5"></div>
<div class="a t" style="left:0;top:478.4px;width:27px;text-align:center;font-size:12px;color:#333;-webkit-text-stroke:0.12px #333">16</div>
<div class="a" style="left:0;top:509.1px;width:26px;height:1px;background:#d5d5d5"></div>
<div class="a t" style="left:0;top:495.5px;width:27px;text-align:center;font-size:12px;color:#333;-webkit-text-stroke:0.12px #333">17</div>
<div class="a" style="left:0;top:526.2px;width:26px;height:1px;background:#d5d5d5"></div>
<div class="a t" style="left:0;top:512.6px;width:27px;text-align:center;font-size:12px;color:#333;-webkit-text-stroke:0.12px #333">18</div>
<div class="a" style="left:0;top:543.2px;width:26px;height:1px;background:#d5d5d5"></div>
<div class="a t" style="left:0;top:529.6px;width:27px;text-align:center;font-size:12px;color:#333;-webkit-text-stroke:0.12px #333">19</div>
<div class="a" style="left:0;top:560.3px;width:26px;height:1px;background:#d5d5d5"></div>
<div class="a t" style="left:0;top:546.7px;width:27px;text-align:center;font-size:12px;color:#333;-webkit-text-stroke:0.12px #333">20</div>
<div class="a" style="left:0;top:577.4px;width:26px;height:1px;background:#d5d5d5"></div>
<div class="a t" style="left:0;top:563.8px;width:27px;text-align:center;font-size:12px;color:#333;-webkit-text-stroke:0.12px #333">21</div>
<div class="a" style="left:0;top:594.5px;width:26px;height:1px;background:#d5d5d5"></div>
<div class="a t" style="left:0;top:580.9px;width:27px;text-align:center;font-size:12px;color:#333;-webkit-text-stroke:0.12px #333">22</div>
<div class="a" style="left:27px;top:197px;width:830.4px;height:56px;background:#b1a0c7"></div>
<div class="a" style="left:27px;top:197px;width:830px;height:56px;overflow:hidden"><div class="c" style="left:377.5px;top:-5.1px;color:#fff;font-size:12.5px;transform:scaleX(0.976)">PPT Sharing</div></div>
<div class="a" style="left:27px;top:270.3px;width:830.4px;height:17.1px;background:linear-gradient(#fdf5ef,#fbe6d8)"></div>
<div class="a" style="left:27px;top:269.8px;width:830.4px;height:1px;background:#4a4a4a"></div>
<div class="a" style="left:27px;top:286.9px;width:830.4px;height:1px;background:#4a4a4a"></div>
<div class="a" style="left:27px;top:304.0px;width:830.4px;height:1px;background:#4a4a4a"></div>
<div class="a" style="left:27px;top:321.1px;width:830.4px;height:1px;background:#4a4a4a"></div>
<div class="a" style="left:27px;top:338.2px;width:830.4px;height:1px;background:#4a4a4a"></div>
<div class="a" style="left:27px;top:355.2px;width:830.4px;height:1px;background:#4a4a4a"></div>
<div class="a" style="left:27px;top:372.3px;width:830.4px;height:1px;background:#4a4a4a"></div>
<div class="a" style="left:27px;top:389.4px;width:830.4px;height:1px;background:#4a4a4a"></div>
<div class="a" style="left:27px;top:406.5px;width:830.4px;height:1px;background:#4a4a4a"></div>
<div class="a" style="left:27px;top:423.6px;width:830.4px;height:1px;background:#4a4a4a"></div>
<div class="a" style="left:102.0px;top:269.8px;width:1px;height:154.8px;background:#3a3a3a"></div>
<div class="a" style="left:527.9px;top:269.8px;width:1px;height:154.8px;background:#707070"></div>
<div class="a" style="left:617.8px;top:269.8px;width:1px;height:154.8px;background:#3a3a3a"></div>
<div class="a" style="left:856.9px;top:269.8px;width:1px;height:154.8px;background:#3a3a3a"></div>
<div class="a" style="left:617.3px;top:252.5px;width:241px;height:18.5px;border:1.6px solid #217346"></div>
<div class="a" style="left:855px;top:268px;width:4px;height:4px;background:#217346;border:1px solid #fff"></div>
<div class="c" style="left:48.25px;top:272.48px;font-size:12.5px;transform:scaleX(0.9594);">S.No.</div>
<div class="c" style="left:291.05px;top:272.48px;font-size:12.5px;transform:scaleX(0.9957);">Link Url</div>
<div class="c" style="left:553.20px;top:272.48px;font-size:12.5px;transform:scaleX(0.9948);">Status</div>
<div class="c" style="left:727.20px;top:272.48px;font-size:12.5px;transform:scaleX(1.0115);">Url</div>
<div class="c" style="left:60.10px;top:289.56px;font-size:12.5px;">1</div>
<div class="a" style="left:103px;top:287.4px;width:425px;height:17.1px;overflow:hidden"><div class="c" style="left:2.2px;top:2.68px;transform:scaleX(0.9609);font-weight:normal;letter-spacing:0.4px;color:#222;-webkit-text-stroke:0.25px #222">https:<span class=s>/</span><span class=s>/</span>www.pearltrees.com<span class=s>/</span>s<span class=s>/</span>file<span class=s>/</span>preview<span class=s>/</span>350290291<span class=s>/</span>Carbon%20Innova</div></div>
<div class="c" style="left:545.80px;top:289.56px;font-size:12.5px;transform:scaleX(1.0093);font-weight:normal;color:#222;-webkit-text-stroke:0.25px #222">Approved</div>
<div class="c" style="left:620.80px;top:290.06px;font-size:12.5px;transform:scaleX(0.9976);font-weight:normal;letter-spacing:0.4px;color:#222;-webkit-text-stroke:0.25px #222">https:<span class=s>/</span><span class=s>/</span>www.carbinnov.com<span class=s>/</span></div>
<div class="c" style="left:60.10px;top:306.66px;font-size:12.5px;">2</div>
<div class="a" style="left:103px;top:304.5px;width:425px;height:17.1px;overflow:hidden"><div class="c" style="left:2.2px;top:2.68px;transform:scaleX(0.9680);font-weight:normal;letter-spacing:0.4px;color:#222;-webkit-text-stroke:0.25px #222">https:<span class=s>/</span><span class=s>/</span>www.slideserve.com<span class=s>/</span>carboninnovation<span class=s>/</span>carbon-innovation-140207</div></div>
<div class="c" style="left:545.80px;top:306.66px;font-size:12.5px;transform:scaleX(1.0093);font-weight:normal;color:#222;-webkit-text-stroke:0.25px #222">Approved</div>
<div class="c" style="left:620.80px;top:307.16px;font-size:12.5px;transform:scaleX(0.9976);font-weight:normal;letter-spacing:0.4px;color:#222;-webkit-text-stroke:0.25px #222">https:<span class=s>/</span><span class=s>/</span>www.carbinnov.com<span class=s>/</span></div>
<div class="c" style="left:60.10px;top:323.75px;font-size:12.5px;">3</div>
<div class="a" style="left:103px;top:321.6px;width:425px;height:17.1px;overflow:hidden"><div class="c" style="left:2.2px;top:2.68px;transform:scaleX(0.9467);font-weight:normal;letter-spacing:0.4px;color:#222;-webkit-text-stroke:0.25px #222">https:<span class=s>/</span><span class=s>/</span>jumpshare.com<span class=s>/</span>v<span class=s>/</span>Uc6g0r6cJAL1Tim8ObT5</div></div>
<div class="c" style="left:545.80px;top:323.75px;font-size:12.5px;transform:scaleX(1.0093);font-weight:normal;color:#222;-webkit-text-stroke:0.25px #222">Approved</div>
<div class="c" style="left:620.80px;top:324.25px;font-size:12.5px;transform:scaleX(0.9976);font-weight:normal;letter-spacing:0.4px;color:#222;-webkit-text-stroke:0.25px #222">https:<span class=s>/</span><span class=s>/</span>www.carbinnov.com<span class=s>/</span></div>
<div class="c" style="left:60.10px;top:340.84px;font-size:12.5px;">4</div>
<div class="a" style="left:103px;top:338.7px;width:425px;height:17.1px;overflow:hidden"><div class="c" style="left:2.2px;top:2.68px;transform:scaleX(0.9361);font-weight:normal;letter-spacing:0.4px;color:#222;-webkit-text-stroke:0.25px #222">https:<span class=s>/</span><span class=s>/</span>spaces.hightail.com<span class=s>/</span>space<span class=s>/</span>VQkfs6KS4f<span class=s>/</span>files<span class=s>/</span>fi-44797137-1241-424</div></div>
<div class="c" style="left:545.80px;top:340.84px;font-size:12.5px;transform:scaleX(1.0093);font-weight:normal;color:#222;-webkit-text-stroke:0.25px #222">Approved</div>
<div class="c" style="left:620.80px;top:341.34px;font-size:12.5px;transform:scaleX(0.9976);font-weight:normal;letter-spacing:0.4px;color:#222;-webkit-text-stroke:0.25px #222">https:<span class=s>/</span><span class=s>/</span>www.carbinnov.com<span class=s>/</span></div>
<div class="c" style="left:60.10px;top:357.93px;font-size:12.5px;">5</div>
<div class="a" style="left:103px;top:355.8px;width:425px;height:17.1px;overflow:hidden"><div class="c" style="left:2.2px;top:2.68px;transform:scaleX(0.9911);font-weight:normal;letter-spacing:0.4px;color:#222;-webkit-text-stroke:0.25px #222">https:<span class=s>/</span><span class=s>/</span>online.fliphtml5.com<span class=s>/</span>mhark<span class=s>/</span>wvbp<span class=s>/</span>#p=1</div></div>
<div class="c" style="left:545.80px;top:357.93px;font-size:12.5px;transform:scaleX(1.0093);font-weight:normal;color:#222;-webkit-text-stroke:0.25px #222">Approved</div>
<div class="c" style="left:620.80px;top:358.43px;font-size:12.5px;transform:scaleX(0.9976);font-weight:normal;letter-spacing:0.4px;color:#222;-webkit-text-stroke:0.25px #222">https:<span class=s>/</span><span class=s>/</span>www.carbinnov.com<span class=s>/</span></div>
<div class="c" style="left:60.10px;top:375.02px;font-size:12.5px;">6</div>
<div class="a" style="left:103px;top:372.8px;width:425px;height:17.1px;overflow:hidden"><div class="c" style="left:2.2px;top:2.68px;transform:scaleX(1.0022);font-weight:normal;letter-spacing:0.4px;color:#222;-webkit-text-stroke:0.25px #222">https:<span class=s>/</span><span class=s>/</span>anyflip.com<span class=s>/</span>xiblw<span class=s>/</span>cczt</div></div>
<div class="c" style="left:545.80px;top:375.02px;font-size:12.5px;transform:scaleX(1.0093);font-weight:normal;color:#222;-webkit-text-stroke:0.25px #222">Approved</div>
<div class="c" style="left:620.80px;top:375.52px;font-size:12.5px;transform:scaleX(0.9976);font-weight:normal;letter-spacing:0.4px;color:#222;-webkit-text-stroke:0.25px #222">https:<span class=s>/</span><span class=s>/</span>www.carbinnov.com<span class=s>/</span></div>
<div class="c" style="left:60.10px;top:392.11px;font-size:12.5px;">7</div>
<div class="a" style="left:103px;top:389.9px;width:425px;height:17.1px;overflow:hidden"><div class="c" style="left:2.2px;top:2.68px;transform:scaleX(0.9637);font-weight:normal;letter-spacing:0.4px;color:#222;-webkit-text-stroke:0.25px #222">https:<span class=s>/</span><span class=s>/</span>www.4shared.com<span class=s>/</span>web<span class=s>/</span>preview<span class=s>/</span>pdf<span class=s>/</span>YCpwY8vUku?</div></div>
<div class="c" style="left:545.80px;top:392.11px;font-size:12.5px;transform:scaleX(1.0093);font-weight:normal;color:#222;-webkit-text-stroke:0.25px #222">Approved</div>
<div class="c" style="left:620.80px;top:392.61px;font-size:12.5px;transform:scaleX(0.9976);font-weight:normal;letter-spacing:0.4px;color:#222;-webkit-text-stroke:0.25px #222">https:<span class=s>/</span><span class=s>/</span>www.carbinnov.com<span class=s>/</span></div>
<div class="c" style="left:60.10px;top:409.19px;font-size:12.5px;">8</div>
<div class="a" style="left:103px;top:407.0px;width:425px;height:17.1px;overflow:hidden"><div class="c" style="left:2.2px;top:2.68px;transform:scaleX(0.9728);font-weight:normal;letter-spacing:0.4px;color:#222;-webkit-text-stroke:0.25px #222">https:<span class=s>/</span><span class=s>/</span>www.mediafire.com<span class=s>/</span>file<span class=s>/</span>1g66x4eaetsl82f<span class=s>/</span>Carbon+Innovation+6.p</div></div>
<div class="c" style="left:545.80px;top:409.19px;font-size:12.5px;transform:scaleX(1.0093);font-weight:normal;color:#222;-webkit-text-stroke:0.25px #222">Approved</div>
<div class="c" style="left:620.80px;top:409.69px;font-size:12.5px;transform:scaleX(0.9976);font-weight:normal;letter-spacing:0.4px;color:#222;-webkit-text-stroke:0.25px #222">https:<span class=s>/</span><span class=s>/</span>www.carbinnov.com<span class=s>/</span></div>
<div class="a" style="left:0px;top:597px;width:1200px;height:19px;background:#e6e6e6"></div>
<div class="a" style="left:0px;top:596.5px;width:1200px;height:1px;background:#c6c6c6"></div>
<svg class="a" style="left:19px;top:603px;" width="6" height="8" viewBox="0 0 6 8"><path d="M5 0.5 L1 4 L5 7.5 Z" fill="#c8c8c8"/></svg>
<svg class="a" style="left:40px;top:603px;" width="6" height="8" viewBox="0 0 6 8"><path d="M1 0.5 L5 4 L1 7.5 Z" fill="#444"/></svg>
<div class="a" style="left:76px;top:600px;width:1px;height:16px;background:#b9b9b9"></div>
<div class="a" style="left:123.3px;top:600px;width:1px;height:16px;background:#b9b9b9"></div>
<div class="a" style="left:218.3px;top:600px;width:1px;height:16px;background:#b9b9b9"></div>
<div class="a" style="left:389.3px;top:600px;width:1px;height:16px;background:#b9b9b9"></div>
<div class="a" style="left:501.5px;top:600px;width:1px;height:16px;background:#b9b9b9"></div>
<div class="a" style="left:643.2px;top:600px;width:1px;height:16px;background:#b9b9b9"></div>
<div class="a" style="left:857px;top:600px;width:1px;height:16px;background:#b9b9b9"></div>
<div class="a" style="left:958.5px;top:600px;width:1px;height:16px;background:#b9b9b9"></div>
<div class="a" style="left:1059px;top:600px;width:1px;height:16px;background:#b9b9b9"></div>
<div class="a" style="left:681px;top:596px;width:87px;height:20px;background:#fff"></div>
<div class="a" style="left:680.5px;top:597px;width:1px;height:19px;background:#c6c6c6"></div>
<div class="a" style="left:767.5px;top:597px;width:1px;height:19px;background:#c6c6c6"></div>
<div class="a t" style="left:84px;top:601.10px;font-size:12px;color:#4d4d4d;">Index</div>
<div class="a t" style="left:135px;top:601.10px;font-size:12px;color:#4d4d4d;">Social Profile</div>
<div class="a t" style="left:231.7px;top:601.10px;font-size:12px;color:#4d4d4d;">Search Engine Submission</div>
<div class="a t" style="left:401px;top:601.10px;font-size:12px;color:#4d4d4d;">Content sharing</div>
<div class="a t" style="left:514px;top:601.10px;font-size:12px;color:#4d4d4d;">Directory Submission</div>
<div class="a t" style="left:651.5px;top:601.10px;font-size:12px;color:#4d4d4d;letter-spacing:-1.1px">SYS&#8203;</div>
<div class="a t" style="left:779px;top:601.10px;font-size:12px;color:#4d4d4d;">PDF Sharing</div>
<div class="a t" style="left:867.5px;top:601.10px;font-size:12px;color:#4d4d4d;">Image Sharing</div>
<div class="a t" style="left:969px;top:601.10px;font-size:12px;color:#4d4d4d;">Social Sharing</div>
<div class="a t" style="left:689px;top:601.10px;font-size:12px;color:#2f7650;font-weight:bold">PPT Sharing</div>
<div class="a t" style="left:1076px;top:600.50px;font-size:12px;color:#444;font-weight:bold">...</div>
<svg class="a" style="left:1097px;top:599px;" width="16" height="16" viewBox="0 0 16 16"><circle cx="8" cy="8" r="6.5" fill="none" stroke="#666" stroke-width="1.1"/><path d="M8 4.5 V11.5 M4.5 8 H11.5" stroke="#666" stroke-width="1.1"/></svg>
<div class="a" style="left:1125px;top:602px;width:1.5px;height:1.5px;background:#aaa"></div>
<div class="a" style="left:1125px;top:606px;width:1.5px;height:1.5px;background:#aaa"></div>
<div class="a" style="left:1125px;top:610px;width:1.5px;height:1.5px;background:#aaa"></div>
<svg class="a" style="left:1142px;top:603px;" width="6" height="8" viewBox="0 0 6 8"><path d="M5 0.5 L1 4 L5 7.5 Z" fill="#444"/></svg>
<div class="a" style="left:1152.5px;top:599px;width:28px;height:17px;background:#fff;border:1px solid #d0d0d0"></div>
<svg class="a" style="left:1188px;top:603px;" width="6" height="8" viewBox="0 0 6 8"><path d="M1 0.5 L5 4 L1 7.5 Z" fill="#444"/></svg>
</body></html>
